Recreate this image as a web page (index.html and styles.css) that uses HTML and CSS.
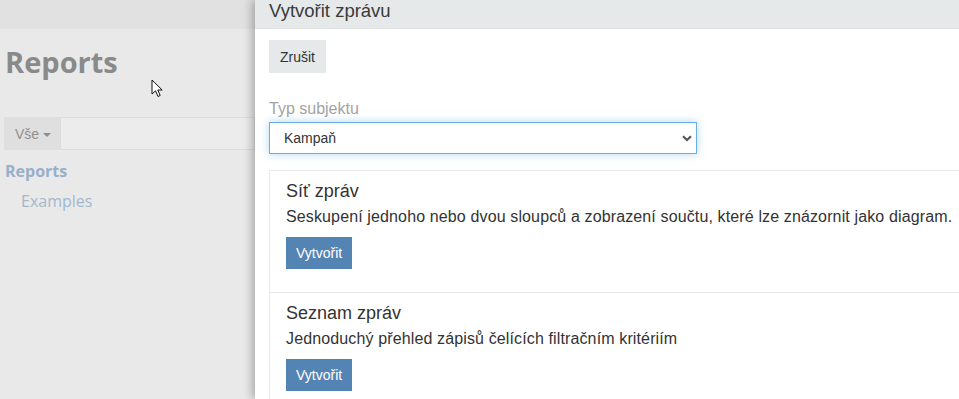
FILE: index.html
```html
<!DOCTYPE html>
<html lang="cs">

<head>
	<meta charset="UTF-8">
	<meta name="viewport" content="width=device-width, initial-scale=1.0">
	<title>Reports</title>

	<link rel="stylesheet" href="styles.css">
</head>

<body>
	<div class="page">
		<div class="page-top"></div>
		<h1 class="page-title">Reports</h1>
		<div class="search">
			<span class="search-filter">Vše <span class="caret"></span></span>
			<input class="search-input" type="text">
		</div>
		<a class="tree-root" href="#">Reports</a>
		<a class="tree-item" href="#">Examples</a>
	</div>

	<div class="panel">
		<div class="panel-header">Vytvořit zprávu</div>
		<div class="panel-body">
			<button class="cancel-button" type="button">Zrušit</button>

			<label class="field-label" for="entity">Typ subjektu</label>
			<div class="select-wrap">
				<select class="field-select" id="entity">
					<option>Kampaň</option>
				</select>
				<svg class="select-arrow" width="10" height="7" viewBox="0 0 10 7">
					<path d="M1 1.2 L5 5 L9 1.2" fill="none" stroke="#555" stroke-width="2.2"/>
				</svg>
			</div>

			<div class="report-types">
				<div class="report-type">
					<h3>Síť zpráv</h3>
					<p>Seskupení jednoho nebo dvou sloupců a zobrazení součtu, které lze znázornit jako diagram.</p>
					<button class="create-button" type="button">Vytvořit</button>
				</div>
				<div class="report-type">
					<h3>Seznam zpráv</h3>
					<p>Jednoduchý přehled zápisů čelících filtračním kritériím</p>
					<button class="create-button" type="button">Vytvořit</button>
				</div>
			</div>
		</div>
	</div>

	<svg class="cursor" width="13" height="20" viewBox="0 0 13 20">
		<path d="M1 1 L1 15 L4.5 11.8 L7 17.5 L9.2 16.5 L6.8 11 L11.2 11 Z" fill="#fff" stroke="#111" stroke-width="1"/>
	</svg>
</body>

</html>
```

FILE: styles.css
```css
body {
	font-family: "Liberation Sans", Arial, sans-serif;
	margin: 0;
	padding: 0;
	display: flex;
	height: 399px;
	overflow: hidden;
	background-color: #e9e9e9;
	position: relative;
}

.page {
	width: 255px;
	flex: none;
	display: flex;
	flex-direction: column;
}

.page-top {
	height: 29px;
	background-color: #e1e1e1;
}

.page-title {
	font-family: "Open Sans", sans-serif;
	font-size: 29px;
	font-weight: 700;
	color: #8a8a8a;
	margin: 11px 0 0 5px;
	line-height: 44px;
}

.search {
	display: flex;
	margin: 33px 0 0 4px;
	height: 33px;
}

.search-filter {
	display: flex;
	align-items: center;
	gap: 4px;
	padding: 0 9px 0 11px;
	background-color: #dfdfdf;
	color: #8f8f8f;
	font-size: 14px;
}

.caret {
	width: 0;
	height: 0;
	border-left: 4px solid transparent;
	border-right: 4px solid transparent;
	border-top: 4px solid #8d8d8d;
	margin-top: 2px;
}

.search-input {
	flex: 1;
	min-width: 0;
	border: 1px solid #dcdcdc;
	background-color: #ececec;
	padding: 0;
}

.tree-root {
	font-family: "Open Sans", sans-serif;
	font-size: 16px;
	font-weight: 700;
	color: #97afc9;
	text-decoration: none;
	margin: 10px 0 0 5px;
	line-height: 22px;
}

.tree-item {
	font-family: "Open Sans", sans-serif;
	font-size: 16px;
	color: #a4b8cd;
	text-decoration: none;
	margin: 8px 0 0 21px;
	line-height: 22px;
}

.panel {
	flex: 1;
	min-width: 0;
	background-color: #fff;
	box-shadow: -3px 0 9px rgba(0, 0, 0, 0.28);
	color: #333;
}

.panel-header {
	height: 29px;
	line-height: 22px;
	padding-left: 14px;
	font-size: 18.5px;
	color: #3a3a3a;
	background-color: #e6e9ea;
	border-bottom: 1px solid #dfe3e4;
	box-sizing: border-box;
}

.panel-body {
	padding: 11px 0 0 14px;
	display: flex;
	flex-direction: column;
	align-items: flex-start;
}

.cancel-button {
	font-family: inherit;
	font-size: 14px;
	color: #333;
	height: 33px;
	width: 57px;
	padding: 0;
	border: none;
	background-color: #e6e9ea;
}

.field-label {
	font-size: 16px;
	line-height: 22px;
	color: #a3a3a3;
	margin-top: 25px;
}

.select-wrap {
	position: relative;
	margin-top: 2px;
}

.field-select {
	appearance: none;
	-webkit-appearance: none;
	width: 428px;
	height: 32px;
	padding: 0 0 0 14px;
	font-family: inherit;
	font-size: 14px;
	color: #333;
	background-color: #fff;
	border: 1px solid #66afe9;
	border-radius: 0;
	box-shadow: 0 0 8px rgba(102, 175, 233, 0.5);
	outline: none;
}

.select-arrow {
	position: absolute;
	right: 5px;
	top: 13px;
	pointer-events: none;
}

.report-types {
	margin-top: 16px;
	align-self: stretch;
	border-left: 1px solid #e8e8e8;
}

.report-type {
	border-top: 1px solid #e8e8e8;
	padding: 9px 0 23px 16px;
}

.report-type h3 {
	font-size: 18px;
	font-weight: 400;
	line-height: 22px;
	margin: 0;
}

.report-type p {
	font-size: 16px;
	line-height: 22px;
	letter-spacing: 0.13px;
	white-space: nowrap;
	margin: 4px 0 0;
}

.create-button {
	margin-top: 9px;
	height: 32px;
	padding: 0 10px;
	border: none;
	font-family: inherit;
	font-size: 14px;
	color: #fff;
	background-color: #5384b4;
}

.cursor {
	position: absolute;
	left: 151px;
	top: 79px;
}
```
